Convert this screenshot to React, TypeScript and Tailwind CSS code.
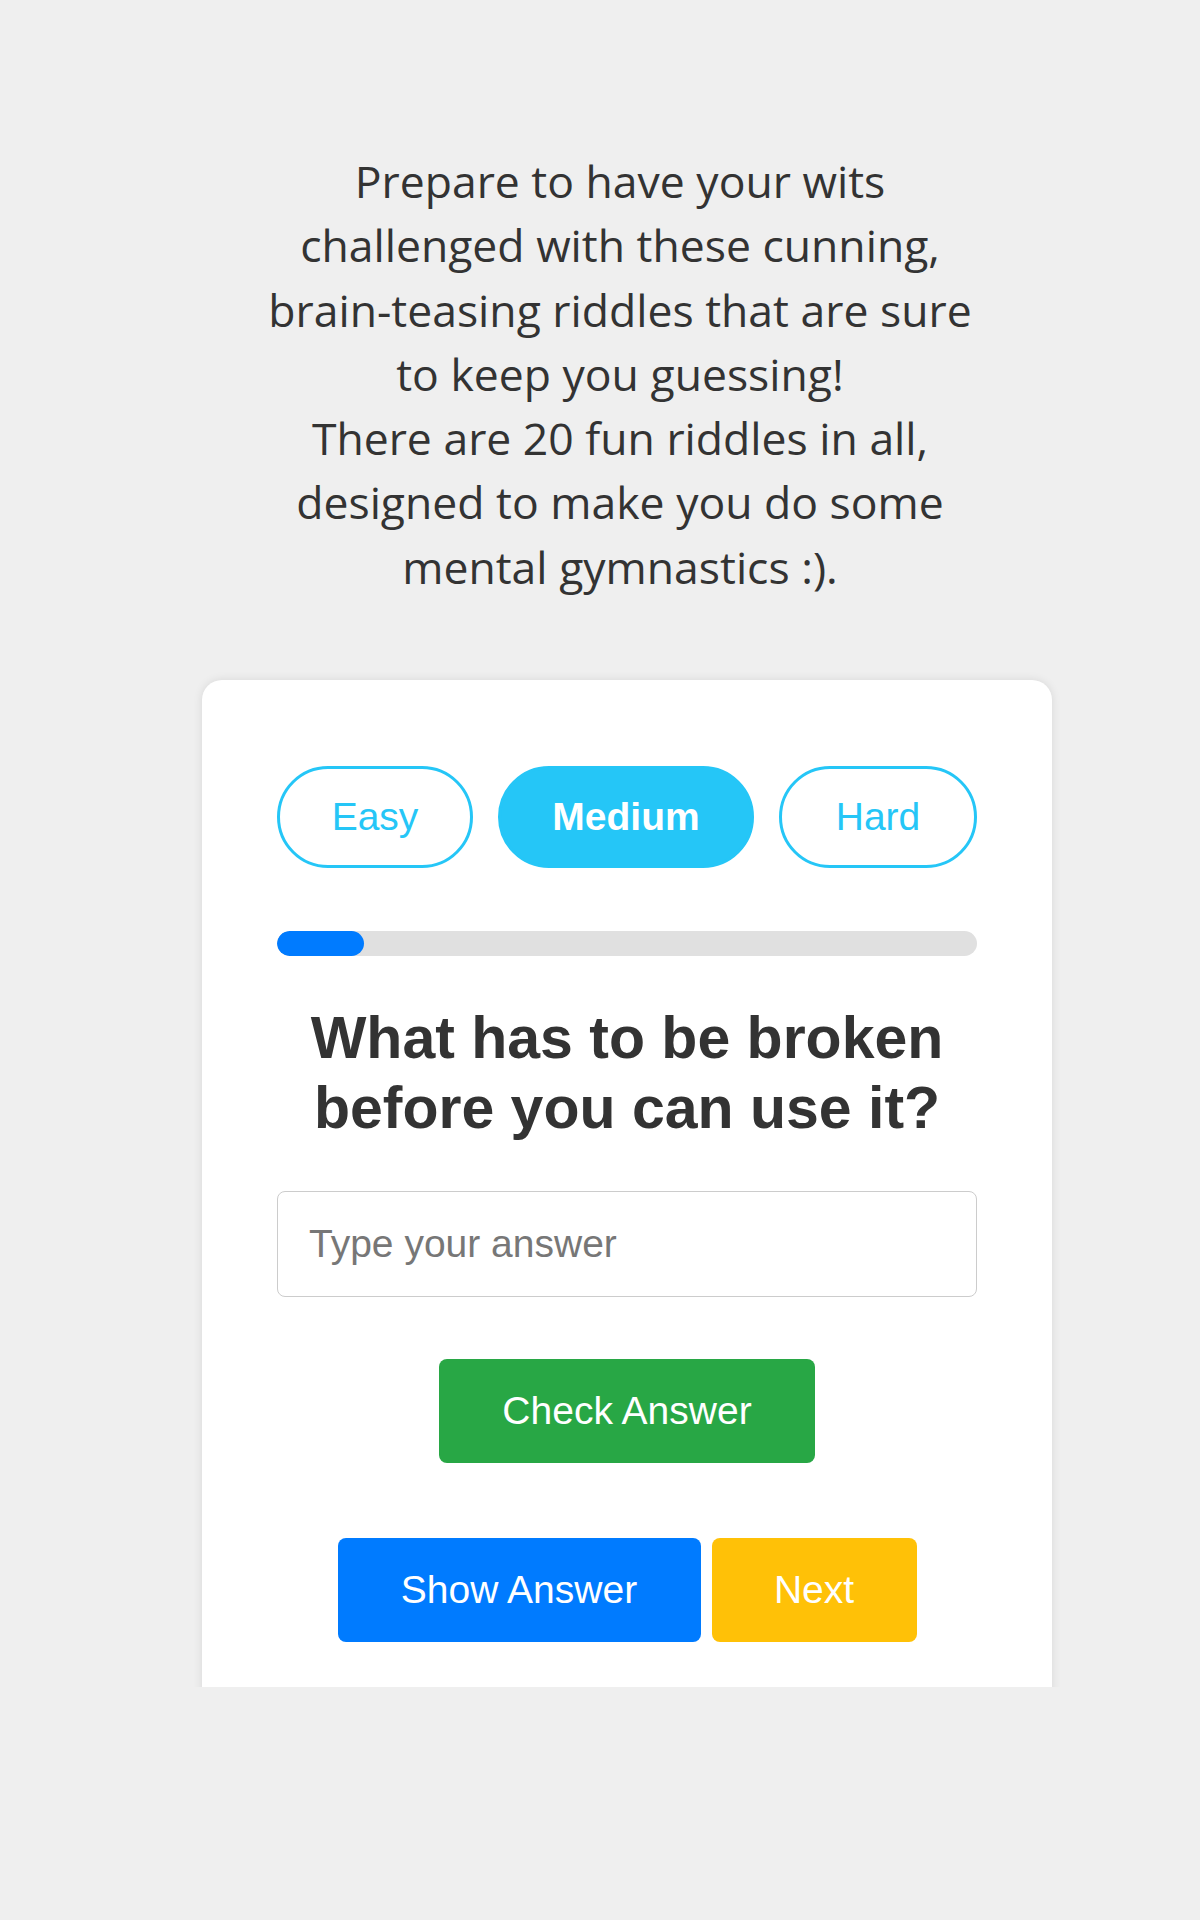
import React from "react";

export default function App() {
  return (
    <div className="w-[1200px] h-[1920px] bg-[#efefef]">
      <div className="h-[1687px] overflow-hidden">
        <div className="pt-[149px] pl-[40px] flex justify-center">
          <p
            className="text-center text-[#333333] text-[44.5px] leading-[64.3px] whitespace-nowrap"
            style={{ fontFamily: '"Open Sans", "Noto Sans", sans-serif' }}
          >
            Prepare to have your wits
            <br />
            challenged with these cunning,
            <br />
            brain-teasing riddles that are sure
            <br />
            to keep you guessing!
            <br />
            There are 20 fun riddles in all,
            <br />
            designed to make you do some
            <br />
            mental gymnastics :).
          </p>
        </div>

        <div
          className="mt-[81px] ml-[202px] w-[850px] h-[1100px] bg-white rounded-[20px] shadow-[0_0_10px_rgba(0,0,0,0.1)] px-[75px] pt-[86px]"
          style={{ fontFamily: '"Liberation Sans", Arial, sans-serif' }}
        >
          <div className="flex justify-between">
            <button className="w-[196px] h-[102px] rounded-full border-[3px] border-[#25c6f7] bg-white text-[#25c6f7] text-[39px]">
              Easy
            </button>
            <button className="w-[256px] h-[102px] rounded-full border-[3px] border-[#25c6f7] bg-[#25c6f7] text-white text-[39px] font-bold">
              Medium
            </button>
            <button className="w-[198px] h-[102px] rounded-full border-[3px] border-[#25c6f7] bg-white text-[#25c6f7] text-[39px]">
              Hard
            </button>
          </div>

          <div className="mt-[63px] h-[25px] w-full rounded-full bg-[#e0e0e0] overflow-hidden">
            <div className="h-full w-[87px] rounded-full bg-[#007bff]" />
          </div>

          <h2 className="mt-[47px] text-center text-[#333333] font-bold text-[59px] leading-[70px]">
            What has to be broken
            <br />
            before you can use it?
          </h2>

          <input
            type="text"
            placeholder="Type your answer"
            className="mt-[48px] block w-full h-[106px] rounded-[8px] border border-[#cccccc] px-[31px] text-[39px] text-[#333333] placeholder:text-[#777777] outline-none"
          />

          <div className="mt-[62px] flex justify-center">
            <button className="w-[376px] h-[104px] rounded-[8px] bg-[#28a745] text-white text-[39px]">
              Check Answer
            </button>
          </div>

          <div className="mt-[75px] flex justify-center gap-[11px]">
            <button className="w-[363px] h-[104px] rounded-[8px] bg-[#007bff] text-white text-[39px]">
              Show Answer
            </button>
            <button className="w-[205px] h-[104px] rounded-[8px] bg-[#ffc107] text-white text-[39px]">
              Next
            </button>
          </div>
        </div>
      </div>
    </div>
  );
}
